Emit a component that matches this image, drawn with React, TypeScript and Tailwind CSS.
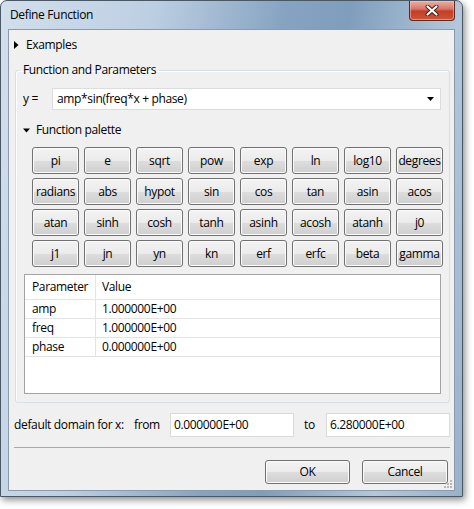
import React from "react";

const FUNCS = [
  "pi", "e", "sqrt", "pow", "exp", "ln", "log10", "degrees",
  "radians", "abs", "hypot", "sin", "cos", "tan", "asin", "acos",
  "atan", "sinh", "cosh", "tanh", "asinh", "acosh", "atanh", "j0",
  "j1", "jn", "yn", "kn", "erf", "erfc", "beta", "gamma",
];

const PARAMS = [
  { name: "amp", value: "1.000000E+00" },
  { name: "freq", value: "1.000000E+00" },
  { name: "phase", value: "0.000000E+00" },
];

// Win7 style push button
const btn =
  "flex items-center justify-center rounded-[3px] border border-[#707070] bg-[linear-gradient(to_bottom,#f3f3f3_0%,#ebebeb_50%,#dddddd_51%,#cfcfcf_100%)] shadow-[inset_0_0_0_1px_#fcfcfc] text-black";

function CloseButton() {
  return (
    <div className="mr-[7px] flex h-[20px] w-[46px] items-center justify-center self-start rounded-b-[4px] border border-t-0 border-[#5b2a22] bg-[linear-gradient(to_bottom,#eab0a2_0%,#d9786a_40%,#c53d25_55%,#cf5636_100%)] shadow-[inset_0_0_0_1px_rgba(255,200,190,0.5)]">
      <svg width="14" height="11" viewBox="0 0 14 11">
        <path d="M2.5 1.5 L11.5 9.5 M11.5 1.5 L2.5 9.5" stroke="#3a1c16" strokeWidth="4" strokeLinecap="round" />
        <path d="M2.5 1.5 L11.5 9.5 M11.5 1.5 L2.5 9.5" stroke="#ffffff" strokeWidth="2.2" strokeLinecap="round" />
      </svg>
    </div>
  );
}

function Palette() {
  return (
    <div className="ml-[16px] mt-[8px] grid grid-cols-[repeat(8,47px)] gap-x-[5px] gap-y-[4px]">
      {FUNCS.map((f) => (
        <div key={f} className={`${btn} h-[27px] border-[#8a8a8a]`}>
          {f}
        </div>
      ))}
    </div>
  );
}

function ParamTable() {
  return (
    <div className="ml-[8px] mt-[7px] h-[120px] w-[417px] border border-[#a3a3a3] bg-white">
      <div className="flex h-[25px] border-b border-[#e5e5e5]">
        <div className="flex w-[71px] items-center border-r border-[#e5e5e5] pl-[7px]">Parameter</div>
        <div className="flex items-center pl-[6px]">Value</div>
      </div>
      {PARAMS.map((p) => (
        <div key={p.name} className="flex h-[19px] border-b border-[#e3e3e3]">
          <div className="flex w-[71px] items-center border-r border-[#e3e3e3] pl-[7px]">{p.name}</div>
          <div className="flex items-center pl-[6px]">{p.value}</div>
        </div>
      ))}
    </div>
  );
}

export default function App() {
  return (
    <div className="h-[509px] w-[474px] bg-white font-['Open_Sans',sans-serif] text-[12px] leading-[16px] tracking-[-0.35px] text-black">
      <div className="flex h-[497px] w-[463px] flex-col rounded-t-[7px] border border-[#4a5866] bg-[linear-gradient(100deg,#d2dfec_0%,#bccfe2_28%,#86a4c1_52%,#7f9ebc_64%,#b3c7da_84%,#98b2ca_100%)] shadow-[2px_3px_7px_rgba(0,0,0,0.45)]">
        {/* Title bar */}
        <div className="flex h-[28px] shrink-0 items-center">
          <span className="pl-[9px] text-[12px]">Define Function</span>
          <div className="ml-auto flex h-full">
            <CloseButton />
          </div>
        </div>

        {/* Client area */}
        <div className="relative mx-[7px] flex h-[462px] flex-col border border-[#8b9bab] bg-[#f0f0f0]">
          {/* Examples */}
          <div className="mt-[6px] flex h-[18px] items-center pl-[5px]">
            <svg width="5" height="8" viewBox="0 0 5 8" className="mr-[7px]">
              <path d="M0 0 L4.5 4 L0 8 Z" fill="#000" />
            </svg>
            <span>Examples</span>
          </div>

          {/* Function and Parameters group */}
          <fieldset className="ml-[6px] mt-[8px] w-[435px] rounded-[3px] border border-[#d5dfe5] pb-[8px] shadow-[inset_1px_1px_0_#ffffff]">
            <legend className="ml-[4px] px-[3px] leading-[16px]">Function and Parameters</legend>

            <div className="mt-[10px] flex items-center">
              <span className="w-[36px] shrink-0 pl-[7px]">y =</span>
              <div className="flex h-[22px] w-[389px] items-center justify-between border border-[#dcdcdc] bg-white pl-[4px] pr-[6px]">
                <span>amp*sin(freq*x + phase)</span>
                <svg width="7" height="4" viewBox="0 0 7 4">
                  <path d="M0 0 L7 0 L3.5 4 Z" fill="#000" />
                </svg>
              </div>
            </div>

            <div className="mt-[11px] flex h-[18px] items-center pl-[7px]">
              <svg width="7" height="5" viewBox="0 0 7 5" className="mr-[6px]">
                <path d="M0 0.5 L7 0.5 L3.5 4.5 Z" fill="#000" />
              </svg>
              <span>Function palette</span>
            </div>

            <Palette />
            <ParamTable />
          </fieldset>

          {/* Domain */}
          <div className="mt-[10px] flex h-[24px] items-center pl-[5px]">
            <span className="w-[120px] shrink-0">default domain for x:</span>
            <span className="w-[36px] shrink-0">from</span>
            <div className="flex h-[24px] w-[124px] items-center border border-[#dadada] bg-white pl-[3px]">0.000000E+00</div>
            <span className="ml-[10px] w-[22px]">to</span>
            <div className="flex h-[24px] w-[124px] items-center border border-[#dadada] bg-white pl-[3px]">6.280000E+00</div>
          </div>

          <div className="ml-[5px] mt-[10px] h-px w-[436px] bg-[#a8a8a8]" />

          {/* Dialog buttons */}
          <div className="mt-[12px] flex justify-end gap-[12px] pr-[6px]">
            <div className={`${btn} h-[24px] w-[85px]`}>OK</div>
            <div className={`${btn} h-[24px] w-[86px]`}>Cancel</div>
          </div>

          {/* Size grip */}
          <svg width="10" height="10" viewBox="0 0 10 10" className="absolute bottom-[1px] right-[1px]">
            {[
              [7, 1], [7, 4], [4, 4], [7, 7], [4, 7], [1, 7],
            ].map(([x, y]) => (
              <rect key={`${x}-${y}`} x={x} y={y} width="2" height="2" fill="#b8b8b8" />
            ))}
          </svg>
        </div>
      </div>
    </div>
  );
}
